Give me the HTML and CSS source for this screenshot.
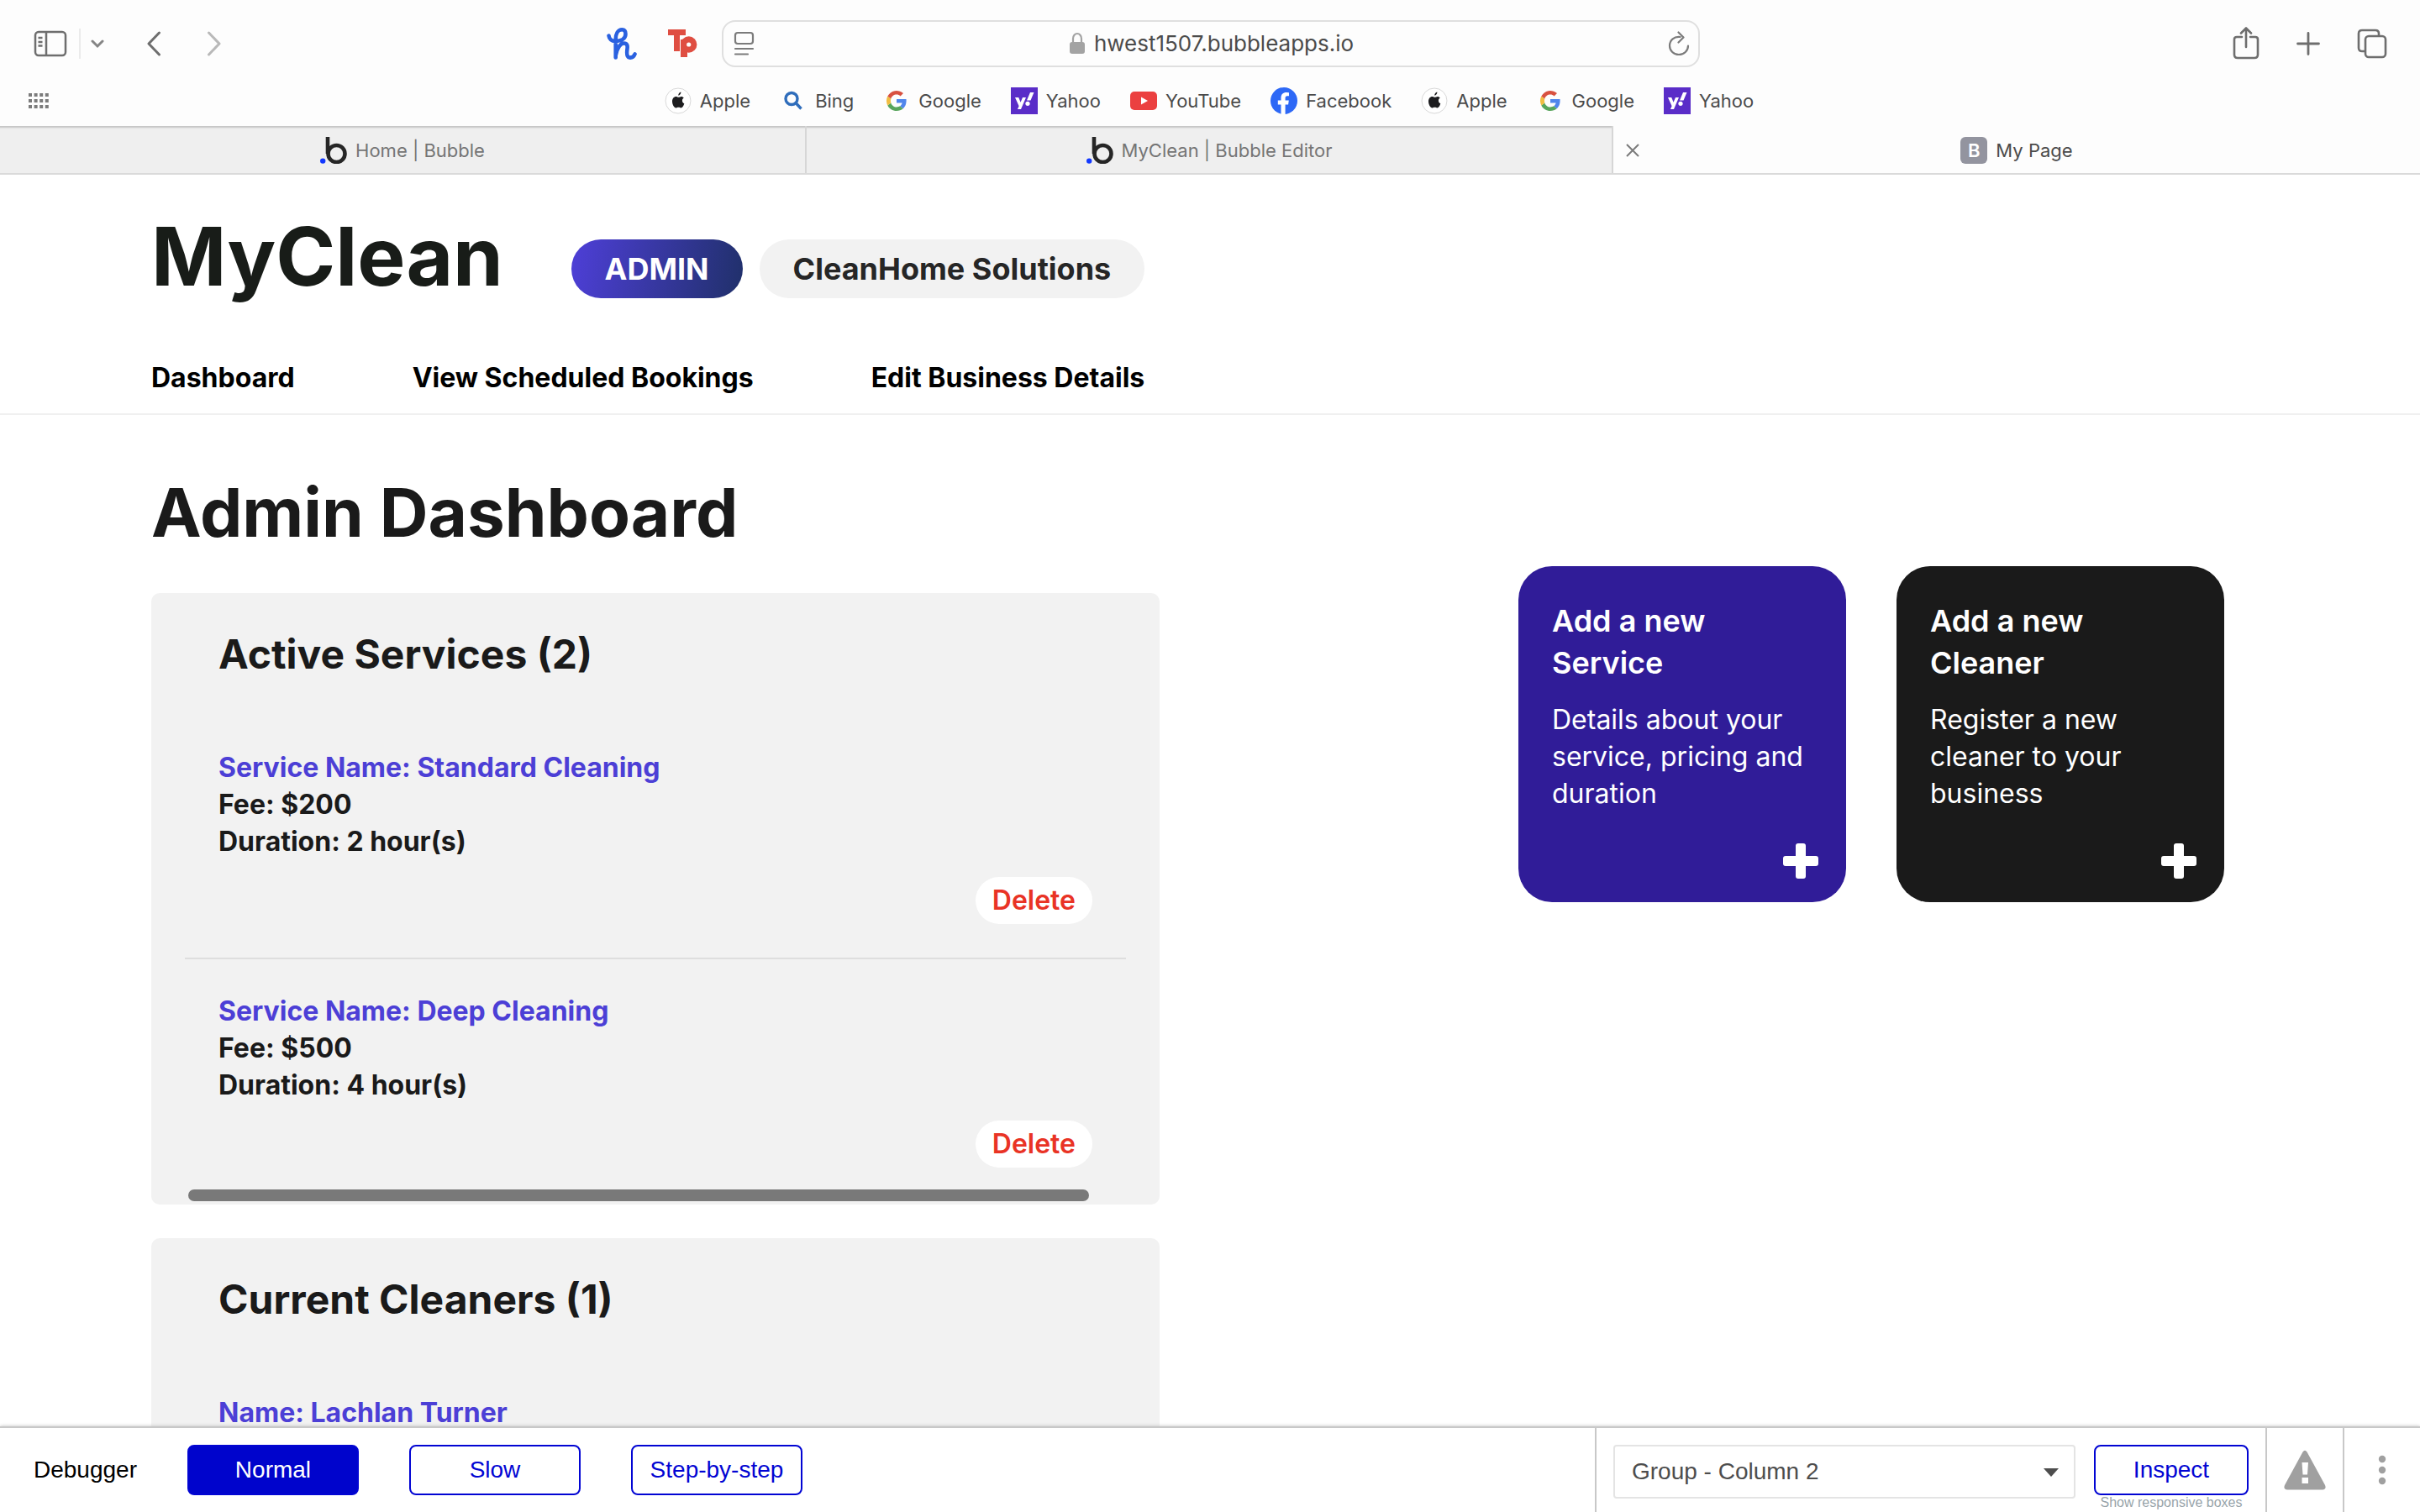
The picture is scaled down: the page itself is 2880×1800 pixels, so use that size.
FILE: index.html
```html
<!DOCTYPE html>
<html lang="en">
<head>
<meta charset="utf-8">
<title>My Page</title>
<link rel="stylesheet" href="styles.css">
</head>
<body>
<svg class="sprite" aria-hidden="true">
  <symbol id="apple" viewBox="0 0 32 32">
    <circle cx="16" cy="16" r="15" fill="#fff" stroke="#d8d8d8" stroke-width="1"/>
    <path fill="#1d1d1f" d="M16.300 9.800c-.2-2 1.300-3.900 3.100-4.300.2 2-1.400 4.100-3.100 4.300zM22.800 20.800c-.6 1.600-1.900 3.700-3.400 3.700-1.100 0-1.500-.7-2.900-.7s-1.900.7-2.900.7c-2.300 0-4.600-4.100-4.600-7.700 0-3.400 2-5.800 4.500-5.800 1.300 0 2.200.8 3.100.8s1.900-.9 3.300-.9c1.100 0 2.200.5 2.900 1.600-2.700 1.700-2.400 5.600.5 6.700-.1.500-.3 1.100-.5 1.600z"/>
  </symbol>
  <symbol id="google" viewBox="0 0 32 32">
    <path fill="#5086ec" d="M27.500 14H16v4.400h6.600c-.4 1.900-1.400 3.100-2.600 3.900l3.700 3c2.500-2.300 4.300-5.600 3.800-11.300z"/>
    <path fill="#58a55c" d="M16 28c3 0 5.700-1 7.700-2.700l-3.700-3c-1 .7-2.400 1.100-4 1.100-3.200 0-5.900-2.100-6.700-5L5.300 21.400C7.300 25.300 11.300 28 16 28z"/>
    <path fill="#f1bd42" d="M9.300 18.400a7.400 7.400 0 0 1 0-4.800l-4-3a12 12 0 0 0 0 10.800z"/>
    <path fill="#d85140" d="M16 8.600c1.800 0 3.300.6 4.500 1.800L24 7A12 12 0 0 0 5.300 10.600l4 3c.8-2.900 3.500-5 6.700-5z"/>
  </symbol>
  <symbol id="yahoo" viewBox="0 0 32 32">
    <path fill="#5a2dc8" d="M0 0h32v32H0z"/>
    <path fill="#fff" d="M5 12h4.200l2.400 5.800L14 12h4l-6 14H8l1.600-3.800zM23 6h4.500l-4 9.500H19z"/>
    <circle cx="20" cy="19.300" r="2.600" fill="#fff"/>
  </symbol>
  <symbol id="bubble" viewBox="0 0 32 32">
    <path fill="none" stroke="#262626" stroke-width="4.600" d="M9 0v20"/>
    <circle cx="19.500" cy="20" r="10" fill="none" stroke="#262626" stroke-width="4.600"/>
    <circle cx="3.200" cy="28.600" r="3.200" fill="#1339ff"/>
  </symbol>
  <symbol id="cross" viewBox="0 0 42 42">
    <path fill="#fff" d="M18 0h6q3 0 3 3v12h12q3 0 3 3v6q0 3-3 3H27v12q0 3-3 3h-6q-3 0-3-3V27H3q-3 0-3-3v-6q0-3 3-3h12V3q0-3 3-3z"/>
  </symbol>
</svg>

<div class="window">
  <header class="browser">
    <div class="toolbar">
      <div class="tool-left">
        <button class="icon-button" aria-label="Show sidebar"><svg width="40" height="32" viewBox="0 0 40 32" fill="none" stroke="#6e6e6e" stroke-width="2.500"><rect x="2" y="2" width="36" height="28" rx="4"/><path d="M15 2v28M5.500 9h5M5.500 14h5M5.500 18.500h5"/></svg></button>
        <span class="rule"></span>
        <button class="icon-button sidebar-menu" aria-label="Sidebar options"><svg width="16" height="12" viewBox="0 0 16 12" fill="none" stroke="#858585" stroke-width="3" stroke-linecap="round"><path d="M2 3l6 6 6-6"/></svg></button>
        <button class="icon-button back" aria-label="Back"><svg width="18" height="30" viewBox="0 0 18 30" fill="none" stroke="#6e6e6e" stroke-width="3" stroke-linecap="round" stroke-linejoin="round"><path d="M15.500 2L3 15l12.500 13"/></svg></button>
        <button class="icon-button forward" aria-label="Forward"><svg width="18" height="30" viewBox="0 0 18 30" fill="none" stroke="#b9b9b9" stroke-width="3" stroke-linecap="round" stroke-linejoin="round"><path d="M2.500 2L15 15 2.500 28"/></svg></button>
        <button class="icon-button extension first" aria-label="Honey"><svg width="36" height="38" viewBox="0 0 36 38" fill="none" stroke="#2a61e0" stroke-width="4.600" stroke-linecap="round" stroke-linejoin="round"><path d="M2.500 9.500C3 13.500 6 16 10 16c8 0 12.500-3.500 12.500-8.500 0-3.500-1.500-5.200-4.200-5.200C13 2.300 10.700 8 10.700 14v21.500M11 32c1.500-7.500 5-13.500 9.500-13.500 4 0 4.500 3 4 6.500-.7 5-1 10 2.500 10.500 3 .4 5.500-1.500 6.500-4"/></svg></button>
        <button class="icon-button extension" aria-label="Teachers Pay Teachers"><svg width="36" height="34" viewBox="0 0 36 34" fill="#df4e42"><path d="M0 0h21v7h-7v19H7V7H0z"/><path d="M15 12h8v21h-8z"/><circle cx="24.700" cy="18" r="9.700"/><circle cx="24.700" cy="18" r="2.600" fill="#fdfdfd"/></svg></button>
      </div>
      <form class="address">
        <svg width="26" height="30" viewBox="0 0 26 30" fill="none" stroke="#7b7b7b" stroke-width="2.200" stroke-linecap="round"><rect x="2" y="2" width="21" height="13" rx="3"/><path d="M2 21h21M2 27.500h15"/></svg>
        <span class="location">
          <svg width="20" height="28" viewBox="0 0 20 28"><rect x="1" y="12" width="18" height="14" rx="3" fill="#a3a3a3"/><path d="M5 13V8a5 6 0 0 1 10 0v5" fill="none" stroke="#a3a3a3" stroke-width="2.200"/></svg>
          <input class="url" type="text" aria-label="Address" value="hwest1507.bubbleapps.io">
        </span>
        <button class="icon-button" type="button" aria-label="Reload"><svg width="26" height="30" viewBox="0 0 26 30" fill="none" stroke="#7b7b7b" stroke-width="2.200" stroke-linecap="round" stroke-linejoin="round"><path d="M14.500 7C7.500 6 2 11 2 17.500a11 10.500 0 0 0 22 0M12.500 1.500l6 6-6 6"/></svg></button>
      </form>
      <div class="tool-right">
        <button class="icon-button" aria-label="Share"><svg width="32" height="40" viewBox="0 0 32 40" fill="none" stroke="#6e6e6e" stroke-width="2.600" stroke-linecap="round" stroke-linejoin="round"><path d="M11 12H5q-3 0-3 3v18q0 4 4 4h20q4 0 4-4V15q0-3-3-3h-6M16 24V2M10 7.500L16 1.500l6 6"/></svg></button>
        <button class="icon-button" aria-label="New tab"><svg width="28" height="28" viewBox="0 0 28 28" fill="none" stroke="#6e6e6e" stroke-width="2.800" stroke-linecap="round"><path d="M14 1.500v25M1.500 14h25"/></svg></button>
        <button class="icon-button" aria-label="Tab overview"><svg width="36" height="36" viewBox="0 0 36 36" fill="none" stroke="#6e6e6e" stroke-width="2.600"><rect x="10" y="9" width="24" height="25" rx="4"/><path d="M10 27H6q-4 0-4-4V6q0-4 4-4h16q4 0 4 4v3"/></svg></button>
      </div>
    </div>
    <div class="favorites">
      <button class="icon-button" aria-label="All favourites"><svg width="24" height="18" viewBox="0 0 24 18" fill="none" stroke="#7b7b7b" stroke-width="4" stroke-dasharray="4 2.600"><path d="M0 2h24M0 9h24M0 16h24"/></svg></button>
      <nav class="bookmarks" aria-label="Favourites">
        <a href="#"><svg class="site"><use href="#apple"/></svg>Apple</a>
        <a href="#"><svg class="site" viewBox="0 0 32 32" fill="none" stroke="#2f6dbb" stroke-width="3.400"><circle cx="14" cy="13.500" r="7"/><path d="M19 18.500l6.500 7"/></svg>Bing</a>
        <a href="#"><svg class="site"><use href="#google"/></svg>Google</a>
        <a href="#"><svg class="site"><use href="#yahoo"/></svg>Yahoo</a>
        <a href="#"><svg class="site" viewBox="0 0 32 32"><rect y="5" width="32" height="22" rx="5" fill="#eb4040"/><path fill="#fff" d="M13 11.500l8 4.500-8 4.500z"/></svg>YouTube</a>
        <a href="#"><svg class="site" viewBox="0 0 32 32"><circle cx="16" cy="16" r="16" fill="#2d68f6"/><path fill="#fff" d="M12.500 32V20.500H8.800v-5h3.700v-2.800C12.500 8.200 15 6 18.900 6c1.500 0 3.100.3 3.100.3v4h-2c-1.800 0-2.400 1.100-2.400 2.400v2.800h4.200l-.7 5h-3.500V32z"/></svg>Facebook</a>
        <a href="#"><svg class="site"><use href="#apple"/></svg>Apple</a>
        <a href="#"><svg class="site"><use href="#google"/></svg>Google</a>
        <a href="#"><svg class="site"><use href="#yahoo"/></svg>Yahoo</a>
      </nav>
    </div>
    <nav class="tabs" aria-label="Open tabs">
      <a class="tab" href="#"><svg class="site"><use href="#bubble"/></svg>Home | Bubble</a>
      <a class="tab" href="#"><svg class="site"><use href="#bubble"/></svg>MyClean | Bubble Editor</a>
      <div class="tab current">
        <button class="icon-button close" aria-label="Close tab"><svg width="16" height="16" viewBox="0 0 16 16" fill="none" stroke="#7b7b7b" stroke-width="2"><path d="M1 1l14 14M15 1L1 15"/></svg></button>
        <span class="letter">B</span>My Page
      </div>
    </nav>
  </header>

  <div class="page">
    <header class="site-header">
      <div class="header-inner">
        <div class="brand">
          <span class="logo">MyClean</span>
          <span class="pills"><span class="pill admin">ADMIN</span><span class="pill">CleanHome Solutions</span></span>
        </div>
        <nav class="main-nav" aria-label="Main">
          <a href="#">Dashboard</a>
          <a href="#">View Scheduled Bookings</a>
          <a href="#">Edit Business Details</a>
        </nav>
      </div>
    </header>
    <main class="dashboard">
      <div class="lists">
        <h1>Admin Dashboard</h1>
        <section class="panel">
          <h2>Active Services (2)</h2>
          <div class="entries">
            <article class="entry">
              <p class="name">Service Name: Standard Cleaning</p>
              <p>Fee: $200</p>
              <p>Duration: 2 hour(s)</p>
              <button class="delete">Delete</button>
            </article>
            <article class="entry">
              <p class="name">Service Name: Deep Cleaning</p>
              <p>Fee: $500</p>
              <p>Duration: 4 hour(s)</p>
              <button class="delete">Delete</button>
            </article>
          </div>
          <div class="scroll-thumb"></div>
        </section>
        <section class="panel">
          <h2>Current Cleaners (1)</h2>
          <div class="entries">
            <article class="entry">
              <p class="name">Name: Lachlan Turner</p>
            </article>
          </div>
        </section>
      </div>
      <div class="actions">
        <button class="action">
          <span class="action-title">Add a new Service</span>
          <span class="action-text">Details about your service, pricing and duration</span>
          <svg class="plus"><use href="#cross"/></svg>
        </button>
        <button class="action dark">
          <span class="action-title">Add a new Cleaner</span>
          <span class="action-text">Register a new cleaner to your business</span>
          <svg class="plus"><use href="#cross"/></svg>
        </button>
      </div>
    </main>
  </div>

  <footer class="debugger">
    <div class="speeds">
      <span>Debugger</span>
      <div class="speed-buttons">
        <button class="debug-button on">Normal</button>
        <button class="debug-button">Slow</button>
        <button class="debug-button">Step-by-step</button>
      </div>
    </div>
    <div class="inspector">
      <div class="select-wrap">
        <select class="element-select" aria-label="Element"><option>Group - Column 2</option></select>
        <svg class="caret" width="18" height="10" viewBox="0 0 18 10"><path fill="#4d4d4d" d="M0 0h18L9 10z"/></svg>
      </div>
      <div class="inspect">
        <button class="debug-button">Inspect</button>
        <a class="hint" href="#">Show responsive boxes</a>
      </div>
    </div>
    <button class="debug-icon" aria-label="Issues"><svg width="50" height="48" viewBox="0 0 50 48"><path fill="#a0a0a0" fill-rule="evenodd" d="M22.500 2.500Q25 -1 27.500 2.500L49 42q2 5-3 5.500H4Q-1 47 1 42zM21.500 15l1 14.500h5.500l1-14.500zM21.500 33v7H29v-7z"/></svg></button>
    <button class="debug-icon" aria-label="More"><svg width="10" height="36" viewBox="0 0 10 36" fill="#a0a0a0"><circle cx="5" cy="5" r="4.200"/><circle cx="5" cy="18" r="4.200"/><circle cx="5" cy="31" r="4.200"/></svg></button>
  </footer>
</div>
</body>
</html>
```
FILE: styles.css
```css
* {
  box-sizing: border-box;
}

body {
  margin: 0;
  background: #fff;
  color: #1a1a1a;
  font-family: Inter, "Liberation Sans", sans-serif;
}

h1, h2, p {
  margin: 0;
}

a {
  color: inherit;
  text-decoration: none;
}

button {
  font: inherit;
  cursor: pointer;
}

svg {
  display: block;
  flex: none;
}

.sprite {
  position: absolute;
  width: 0;
  height: 0;
}

.window {
  display: flex;
  flex-direction: column;
  height: 100vh;
  overflow: hidden;
}

/* Browser chrome */

.browser {
  flex: none;
  background: #fdfdfd;
  color: #4b4b4b;
  font-size: 22px;
}

.icon-button {
  display: flex;
  padding: 0;
  border: 0;
  background: none;
}

.toolbar {
  display: grid;
  grid-template-columns: 1fr minmax(0, 1164px) 1fr;
  align-items: center;
  height: 104px;
  padding: 0 39px 0 40px;
}

.tool-left,
.tool-right {
  display: flex;
  align-items: center;
}

.tool-right {
  justify-content: flex-end;
  gap: 44px;
}

.rule {
  width: 2px;
  height: 36px;
  margin-left: 14px;
  background: #ebebeb;
}

.sidebar-menu {
  margin-left: 12px;
}

.back {
  margin-left: 50px;
}

.forward {
  margin-left: 54px;
}

.extension {
  margin-right: 28px;
}

.extension.first {
  margin-left: auto;
  margin-right: 37px;
}

.address {
  display: flex;
  align-items: center;
  justify-content: space-between;
  height: 56px;
  padding: 0 10px 0 12px;
  border: 2px solid #dfdfdf;
  border-radius: 16px;
}

.location {
  display: flex;
  align-items: center;
  gap: 10px;
}

.url {
  field-sizing: content;
  padding: 0;
  border: 0;
  background: none;
  color: #4b4b4b;
  font: 26px/36px Inter, "Liberation Sans", sans-serif;
}

.favorites {
  display: grid;
  grid-template-columns: 1fr auto 1fr;
  align-items: center;
  height: 46px;
  padding: 0 36px 14px 34px;
}

.bookmarks {
  display: flex;
  gap: 35px;
}

.bookmarks a {
  display: flex;
  align-items: center;
  gap: 10px;
}

.site {
  width: 32px;
  height: 32px;
}

.tabs {
  display: grid;
  grid-template-columns: repeat(3, 1fr);
  height: 58px;
  border-bottom: 2px solid #dadada;
}

.tab {
  position: relative;
  display: flex;
  align-items: center;
  justify-content: center;
  gap: 10px;
  padding-top: 2px;
  border-right: 2px solid #d6d6d6;
  background: #efefef;
  box-shadow: inset 0 4px 2px -2px #c4c4c4;
  color: #757575;
}

.tab.current {
  border-right: 0;
  background: #fdfdfd;
  box-shadow: none;
  color: #4b4b4b;
}

.close {
  position: absolute;
  left: 15px;
}

.letter {
  width: 32px;
  border-radius: 6px;
  background: #93949f;
  color: #fff;
  font-weight: 600;
  line-height: 32px;
  text-align: center;
}

/* Page */

.page {
  flex: 1;
  min-height: 0;
  overflow: hidden;
}

.site-header {
  padding: 40px 180px 20px;
  border-bottom: 2px solid #f0f0f0;
}

.header-inner {
  display: inline-flex;
  flex-direction: column;
  gap: 66px;
  vertical-align: top;
}

.brand {
  display: flex;
  align-items: flex-end;
  justify-content: space-between;
}

.logo {
  color: #181c18;
  font-size: 96px;
  font-weight: 700;
  line-height: 114px;
}

.pills {
  display: flex;
  gap: 20px;
  padding-bottom: 7px;
}

.pill {
  padding: 0 40px;
  border-radius: 35px;
  background: #f2f2f2;
  color: #262626;
  font-size: 36px;
  font-weight: 700;
  line-height: 70px;
}

.pill.admin {
  background: linear-gradient(100deg, #4e3fd8, #20306a);
  color: #fff;
}

.main-nav {
  display: flex;
  gap: 140px;
  color: #000;
  font-size: 32px;
  font-weight: 700;
  line-height: 44px;
}

.dashboard {
  display: flex;
  align-items: flex-start;
  justify-content: space-between;
  padding: 60px 233px 0 180px;
}

.lists {
  display: flex;
  flex-direction: column;
  gap: 40px;
  width: 1200px;
}

h1 {
  font-size: 80px;
  font-weight: 700;
  line-height: 112px;
}

.panel {
  padding: 40px 40px 4px;
  border-radius: 10px;
  background: #f2f2f2;
}

h2 {
  padding: 0 40px;
  font-size: 48px;
  font-weight: 700;
  line-height: 66px;
}

.entries {
  padding-top: 40px;
}

.entry {
  padding: 40px 40px 0;
  font-size: 32px;
  font-weight: 700;
  line-height: 44px;
}

.entry + .entry {
  margin-top: 40px;
  border-top: 2px solid #dedede;
}

.entry .name {
  color: #4c3fd6;
}

.delete {
  display: block;
  margin: 20px 0 0 auto;
  padding: 0 20px;
  border: 0;
  border-radius: 28px;
  background: #fff;
  color: #e93325;
  font-weight: 600;
  line-height: 56px;
}

.scroll-thumb {
  height: 14px;
  margin: 26px 44px 0 4px;
  border-radius: 7px;
  background: #797979;
}

.actions {
  display: flex;
  gap: 60px;
  padding-top: 120px;
}

.action {
  display: flex;
  flex-direction: column;
  width: 390px;
  min-height: 400px;
  padding: 40px 33px 28px 40px;
  border: 0;
  border-radius: 40px;
  background: #301c98;
  color: #fff;
  text-align: left;
}

.action.dark {
  background: #1a1a1a;
}

.action-title {
  width: 240px;
  font-size: 36px;
  font-weight: 600;
  line-height: 50px;
}

.action-text {
  margin-top: 21px;
  font-size: 32px;
  line-height: 44px;
}

.plus {
  width: 42px;
  height: 42px;
  margin: auto 0 0 auto;
}

/* Debugger bar */

.debugger {
  position: relative;
  display: flex;
  flex: none;
  height: 102px;
  border-top: 2px solid #c8c8c8;
  background: #fff;
  box-shadow: 0 0 4px #bbb;
  color: #000;
  font: 28px/32px "Liberation Sans", Arial, sans-serif;
}

.speeds {
  display: flex;
  flex: 1;
  align-items: center;
  gap: 60px;
  padding-left: 40px;
}

.speed-buttons {
  display: flex;
  gap: 60px;
}

.debug-button {
  width: 204px;
  height: 60px;
  border: 2px solid #0205d3;
  border-radius: 8px;
  background: #fff;
  color: #0205d3;
}

.debug-button.on {
  background: #0004cc;
  color: #fff;
}

.inspector {
  display: flex;
  gap: 22px;
  padding: 20px 20px 0;
  border-left: 2px solid #c8c8c8;
}

.select-wrap {
  position: relative;
  width: 550px;
}

.element-select {
  width: 100%;
  height: 64px;
  padding: 0 20px;
  border: 2px solid #e4e4e4;
  border-radius: 4px;
  appearance: none;
  background: #fff;
  color: #4d4d4d;
  font: inherit;
}

.caret {
  position: absolute;
  top: 28px;
  right: 20px;
  pointer-events: none;
}

.inspect {
  display: flex;
  flex-direction: column;
  align-items: center;
}

.inspect .debug-button {
  width: 184px;
}

.hint {
  color: #98a4aa;
  font-size: 16px;
  line-height: 18px;
}

.debug-icon {
  display: flex;
  align-items: center;
  justify-content: center;
  width: 92px;
  border: 0;
  border-left: 2px solid #c8c8c8;
  background: #fff;
}
```
